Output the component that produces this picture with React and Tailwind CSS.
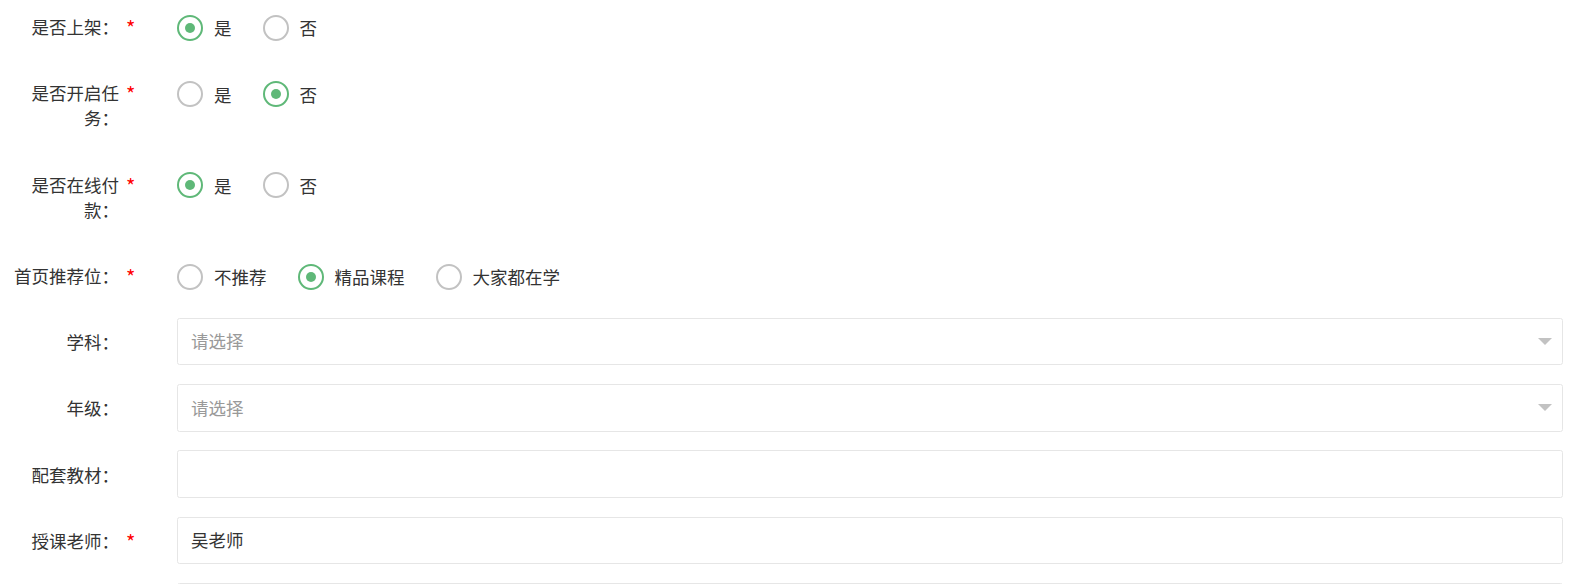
import React from "react";

const Radio = ({ checked, label }) => (
  <label className="flex items-center h-[35px] mr-[31px] text-[#333]">
    <svg width="26" height="26" viewBox="0 0 26 26" className="shrink-0">
      <circle cx="13" cy="13" r="12" fill="none" stroke={checked ? "#5FB878" : "#c2c2c2"} strokeWidth="2" />
      {checked && <circle cx="13" cy="13" r="5" fill="#5FB878" />}
    </svg>
    <span className="ml-[11px] leading-[25px] whitespace-nowrap">{label}</span>
  </label>
);

const Row = ({ label, required, children }) => (
  <div className="flex mb-[18.75px]">
    <div className="w-[119px] shrink-0 pl-[6px] py-[11.25px] leading-[25px] text-right text-[#333]">{label}</div>
    <div className="w-[58px] shrink-0 pl-[7px] py-[11.25px] leading-[25px] text-[#f00] text-[20px]">
      {required ? <span className="relative top-[1px]">*</span> : ""}
    </div>
    {children}
  </div>
);

const Radios = ({ items }) => (
  <div className="flex pt-[7.5px]">
    {items.map(([t, c]) => (
      <Radio key={t} label={t} checked={c} />
    ))}
  </div>
);

const Box = ({ text, placeholder, select }) => (
  <div className="flex-1 mr-[19px] h-[47.5px] border border-[#e6e6e6] rounded-[2.5px] bg-white flex items-center pl-[13px] pr-[10px]">
    <span className={`flex-1 ${placeholder ? "text-[#999]" : "text-[#333]"}`}>{text}</span>
    {select && <span className="w-0 h-0 border-l-[7.5px] border-r-[7.5px] border-t-[7.5px] border-l-transparent border-r-transparent border-t-[#c2c2c2]" />}
  </div>
);

export default function App() {
  return (
    <div className="w-[1582px] h-[584px] overflow-hidden bg-white pt-[2.75px] font-['Noto_Sans_CJK_SC',sans-serif] text-[17.5px]">
      <Row label="是否上架：" required>
        <Radios items={[["是", true], ["否", false]]} />
      </Row>
      <Row label="是否开启任务：" required>
        <Radios items={[["是", false], ["否", true]]} />
      </Row>
      <Row label="是否在线付款：" required>
        <Radios items={[["是", true], ["否", false]]} />
      </Row>
      <Row label="首页推荐位：" required>
        <Radios items={[["不推荐", false], ["精品课程", true], ["大家都在学", false]]} />
      </Row>
      <Row label="学科：">
        <Box text="请选择" placeholder select />
      </Row>
      <Row label="年级：">
        <Box text="请选择" placeholder select />
      </Row>
      <Row label="配套教材：">
        <Box text="" />
      </Row>
      <Row label="授课老师：" required>
        <Box text="吴老师" />
      </Row>
      <Row label="">
        <Box text="" />
      </Row>
    </div>
  );
}
